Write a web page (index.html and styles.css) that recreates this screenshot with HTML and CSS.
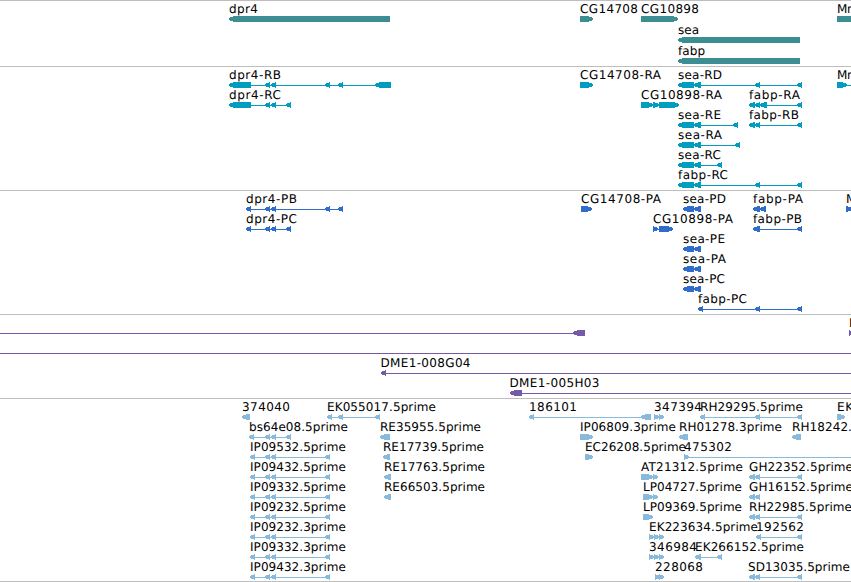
FILE: index.html
```
<!DOCTYPE html>
<html lang="en">
<head>
    <meta charset="UTF-8">
    <title>Genome tracks</title>
    <link rel="stylesheet" href="styles.css">
</head>
<body>
    <main class="tracks">
        <section class="track genes" data-track="genes"></section>
        <section class="track transcripts" data-track="transcripts"></section>
        <section class="track proteins" data-track="proteins"></section>
        <section class="track bacs" data-track="bacs"></section>
        <section class="track ests" data-track="ests"></section>
    </main>
    <script src="tracks.js"></script>
</body>
</html>
```
FILE: styles.css
```
:root {
    --rule: #bebebe;
    --gene: #3d8e92;
    --transcript: #009dbf;
    --protein: #2f6ccb;
    --bac: #765aa7;
    --est: #88bbdb;
}

body {
    margin: 0;
    background: #fff;
    overflow: hidden;
}

.tracks {
    width: 851px;
    border-bottom: 1px solid var(--rule);
}

.track {
    border-top: 1px solid var(--rule);
    padding-bottom: 3px;
}

.genes, .ests {
    padding-bottom: 2px;
}

.row {
    display: block;
    width: 851px;
    height: 20px;
    overflow: visible;
}

.genes .row {
    height: 21px;
}

.row text {
    font-family: "DejaVu Sans", sans-serif;
    font-size: 12px;
    fill: #000;
    text-rendering: geometricPrecision;
}

.row polygon, .row rect {
    shape-rendering: crispEdges;
}

.genes { fill: var(--gene); }
.transcripts { fill: var(--transcript); }
.proteins { fill: var(--protein); }
.bacs { fill: var(--bac); }
.ests { fill: var(--est); }
```
FILE: tracks.js
```
// feature: [label, x, label width, strand, exons, optional line extent]
const threePrime = [[265, 270], [271, 276]];
const ipExons = [[250, 255], ...threePrime, [325, 330]];
const seaStart = [[678, 694], [694, 701]];
const seaProtein = [[683, 694], [694, 701]];
const fabpPair = [[749, 755], [755, 760]];
const lastExon = [797, 802];

const tracks = {
    genes: [
        [
            ['dpr4', 229, 29, '-', [[229, 390]]],
            ['CG14708', 580, 58, '+', [[580, 593]]],
            ['CG10898', 641, 58, '+', [[641, 678]]],
            ['Mr', 837, 15, '+', [[837, 870]]]
        ],
        [['sea', 678, 21, '-', [[678, 800]]]],
        [['fabp', 678, 27, '-', [[678, 800]]]]
    ],
    transcripts: [
        [
            ['dpr4-RB', 229, 52, '-', [[229, 251], ...threePrime, [325, 330], [338, 343], [375, 391]]],
            ['CG14708-RA', 580, 81, '+', [[580, 593]]],
            ['sea-RD', 678, 44, '-', [...seaStart, [755, 760], lastExon]],
            ['Mr', 837, 15, '+', [[837, 847]], [837, 851]]
        ],
        [
            ['dpr4-RC', 229, 52, '-', [[229, 251], ...threePrime, [286, 291]]],
            ['CG10898-RA', 641, 81, '+', [[641, 653], [653, 659], [659, 679]]],
            ['fabp-RA', 749, 51, '-', [...fabpPair, [760, 767], lastExon]]
        ],
        [
            ['sea-RE', 678, 43, '-', [...seaStart, [733, 738]]],
            ['fabp-RB', 749, 50, '-', [...fabpPair, lastExon]]
        ],
        [['sea-RA', 678, 44, '-', [...seaStart, [735, 740]]]],
        [['sea-RC', 678, 43, '-', [...seaStart, [717, 722]]]],
        [['fabp-RC', 678, 50, '-', [...seaStart, [755, 760], lastExon]]]
    ],
    proteins: [
        [
            ['dpr4-PB', 246, 51, '-', [[246, 251], ...threePrime, [325, 330], [338, 343]]],
            ['CG14708-PA', 581, 80, '+', [[581, 592]]],
            ['sea-PD', 683, 43, '-', seaProtein],
            ['fabp-PA', 753, 50, '-', [[753, 760], [760, 766]]],
            ['M', 846, 10, '+', [[846, 852]]]
        ],
        [
            ['dpr4-PC', 246, 51, '-', [[246, 251], ...threePrime, [286, 291]]],
            ['CG10898-PA', 653, 80, '+', [[653, 658], [659, 673]]],
            ['fabp-PB', 753, 49, '-', [[753, 760], lastExon]]
        ],
        [['sea-PE', 683, 42, '-', seaProtein]],
        [['sea-PA', 683, 43, '-', seaProtein]],
        [['sea-PC', 683, 42, '-', seaProtein]],
        [['fabp-PC', 698, 49, '-', [[698, 703], [755, 760], lastExon]]]
    ],
    bacs: [
        [
            ['', 0, 0, '-', [[573, 585]], [0, 585]],
            ['D', 849, 9, '+', [[849, 854]]]
        ],
        [['', 0, 0, '-', [], [0, 851]]],
        [['DME1-008G04', 380.5, 90, '-', [[381, 386]], [381, 851]]],
        [['DME1-005H03', 509.5, 90, '-', [[510, 522]], [510, 851]]]
    ],
    ests: [
        [
            ['374040', 242, 48, '-', [[242, 250]]],
            ['EK055017.5prime', 327, 109, '-', [[327, 332], [338, 343], [375, 380]]],
            ['186101', 529, 48, '-', [[529, 534], [641, 651]]],
            ['347394', 654, 48, '+', [[654, 659], [659, 664]]],
            ['RH29295.5prime', 700, 103, '-', [[700, 705], [755, 760], lastExon]],
            ['EK', 837, 16, '+', [[837, 845]]]
        ],
        [
            ['bs64e08.5prime', 249, 99, '-', [[249, 254], ...threePrime, [286, 291]]],
            ['RE35955.5prime', 380, 101, '-', [[380, 390]]],
            ['IP06809.3prime', 580, 96, '+', [[580, 593]]],
            ['RH01278.3prime', 679, 103, '-', [[679, 688]]],
            ['RH18242.5prime', 792, 103, '-', [[792, 801]]]
        ],
        [
            ['IP09532.5prime', 250, 96, '-', ipExons],
            ['RE17739.5prime', 383, 101, '-', [[383, 390]]],
            ['EC26208.5prime', 585, 101, '+', [[585, 593]]],
            ['475302', 684, 48, '+', [[684, 689]], [684, 851]]
        ],
        [
            ['IP09432.5prime', 250, 96, '-', ipExons],
            ['RE17763.5prime', 384, 101, '-', [[384, 391]]],
            ['AT21312.5prime', 641, 102, '+', [[641, 653], [653, 658]]],
            ['GH22352.5prime', 749, 104, '-', [...fabpPair, lastExon]]
        ],
        [
            ['IP09332.5prime', 250, 96, '-', ipExons],
            ['RE66503.5prime', 384, 101, '-', [[384, 391]]],
            ['LP04727.5prime', 643, 99, '+', [[643, 653], [653, 658]]],
            ['GH16152.5prime', 749, 104, '-', fabpPair]
        ],
        [
            ['IP09232.5prime', 250, 96, '-', ipExons],
            ['LP09369.5prime', 643, 99, '+', [[643, 653]]],
            ['RH22985.5prime', 749, 103, '-', [...fabpPair, lastExon]]
        ],
        [
            ['IP09232.3prime', 250, 96, '-', ipExons],
            ['EK223634.5prime', 649, 109, '+', [[649, 654], [654, 659], [659, 664]]],
            ['192562', 756, 48, '-', [[756, 761], lastExon]]
        ],
        [
            ['IP09332.3prime', 250, 96, '-', ipExons],
            ['346984', 649, 48, '+', [[649, 654], [654, 659], [659, 664]]],
            ['EK266152.5prime', 695, 109, '-', [[695, 701], [717, 722]]]
        ],
        [
            ['IP09432.3prime', 250, 96, '-', ipExons],
            ['228068', 655, 48, '+', [[655, 660], [659, 664]]],
            ['SD13035.5prime', 748, 102, '-', [...fabpPair, lastExon]]
        ]
    ]
};

// Arrow shaped exon, 6px high with a blunt head of up to 5px
function exon(start, end, strand) {
    const head = Math.min(5, end - start);
    const points = strand === '-'
        ? [[start, 17], [start + head, 15], [end, 15], [end, 21], [start + head, 21], [start, 19]]
        : [[end, 17], [end - head, 15], [start, 15], [start, 21], [end - head, 21], [end, 19]];
    return `<polygon points="${points.join(' ')}"/>`;
}

function feature([label, x, width, strand, exons, extent]) {
    const [from, to] = extent || [exons[0][0], exons[exons.length - 1][1]];
    let out = '';
    if (extent || exons.length > 1) {
        out += `<rect x="${from}" y="18" width="${to - from}" height="1"/>`;
    }
    out += exons.map(([start, end]) => exon(start, end, strand)).join('');
    if (label) {
        out += `<text x="${x}" y="12" textLength="${width}">${label}</text>`;
    }
    return out;
}

document.querySelectorAll('.track').forEach(el => {
    el.innerHTML = tracks[el.dataset.track]
        .map(row => `<svg class="row">${row.map(feature).join('')}</svg>`)
        .join('');
});
```
